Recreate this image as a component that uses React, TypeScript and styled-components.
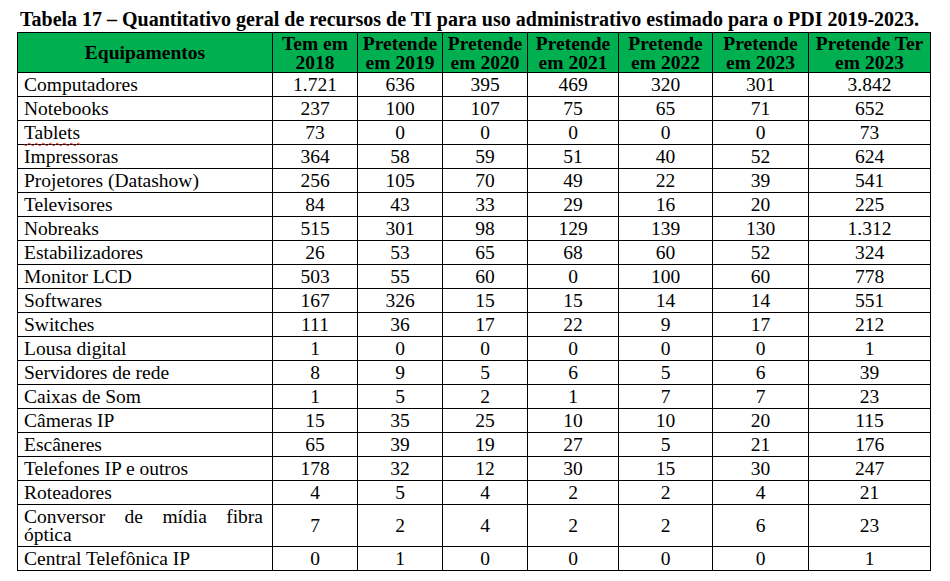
import styled, { createGlobalStyle } from "styled-components";

type Row = {
  name: string;
  values: string[];
  flagged?: boolean;
  tall?: boolean;
};

const columns = [
  { label: ["Equipamentos"], width: 255 },
  { label: ["Tem em", "2018"], width: 85 },
  { label: ["Pretende", "em 2019"], width: 85 },
  { label: ["Pretende", "em 2020"], width: 85 },
  { label: ["Pretende", "em 2021"], width: 91 },
  { label: ["Pretende", "em 2022"], width: 94 },
  { label: ["Pretende", "em 2023"], width: 96 },
  { label: ["Pretende Ter", "em 2023"], width: 122 },
];

const rows: Row[] = [
  { name: "Computadores", values: ["1.721", "636", "395", "469", "320", "301", "3.842"] },
  { name: "Notebooks", values: ["237", "100", "107", "75", "65", "71", "652"] },
  { name: "Tablets", values: ["73", "0", "0", "0", "0", "0", "73"], flagged: true },
  { name: "Impressoras", values: ["364", "58", "59", "51", "40", "52", "624"] },
  { name: "Projetores (Datashow)", values: ["256", "105", "70", "49", "22", "39", "541"] },
  { name: "Televisores", values: ["84", "43", "33", "29", "16", "20", "225"] },
  { name: "Nobreaks", values: ["515", "301", "98", "129", "139", "130", "1.312"] },
  { name: "Estabilizadores", values: ["26", "53", "65", "68", "60", "52", "324"] },
  { name: "Monitor LCD", values: ["503", "55", "60", "0", "100", "60", "778"] },
  { name: "Softwares", values: ["167", "326", "15", "15", "14", "14", "551"] },
  { name: "Switches", values: ["111", "36", "17", "22", "9", "17", "212"] },
  { name: "Lousa digital", values: ["1", "0", "0", "0", "0", "0", "1"] },
  { name: "Servidores de rede", values: ["8", "9", "5", "6", "5", "6", "39"] },
  { name: "Caixas de Som", values: ["1", "5", "2", "1", "7", "7", "23"] },
  { name: "Câmeras IP", values: ["15", "35", "25", "10", "10", "20", "115"] },
  { name: "Escâneres", values: ["65", "39", "19", "27", "5", "21", "176"] },
  { name: "Telefones IP e outros", values: ["178", "32", "12", "30", "15", "30", "247"] },
  { name: "Roteadores", values: ["4", "5", "4", "2", "2", "4", "21"] },
  { name: "Conversor de mídia fibra óptica", values: ["7", "2", "4", "2", "2", "6", "23"], tall: true },
  { name: "Central Telefônica IP", values: ["0", "1", "0", "0", "0", "0", "1"] },
];

export default function App() {
  return (
    <>
      <GlobalStyle />
      <Page>
        <Table>
          <Caption>
            Tabela 17 – Quantitativo geral de recursos de TI para uso administrativo estimado
            para o PDI 2019-2023.
          </Caption>
          <colgroup>
            {columns.map((c, i) => (
              <col key={i} style={{ width: c.width }} />
            ))}
          </colgroup>
          <thead>
            <HeadRow>
              {columns.map((c, i) => (
                <HeadCell key={i}>
                  {c.label.map((line, j) => (
                    <HeadLine key={j}>{line}</HeadLine>
                  ))}
                </HeadCell>
              ))}
            </HeadRow>
          </thead>
          <tbody>
            {rows.map((r) => (
              <BodyRow key={r.name} $tall={r.tall}>
                <NameCell $justify={r.tall}>
                  {r.flagged ? <Flagged>{r.name}</Flagged> : r.name}
                </NameCell>
                {r.values.map((v, i) => (
                  <NumCell key={i}>{v}</NumCell>
                ))}
              </BodyRow>
            ))}
          </tbody>
        </Table>
      </Page>
    </>
  );
}

/*
=========== STYLES =================
*/
const GlobalStyle = createGlobalStyle`
  html, body {
    margin: 0;
    padding: 0;
    background: #ffffff;
  }
  body {
    font-family: "Liberation Serif", "Times New Roman", serif;
    color: #000000;
  }
`;

const Page = styled.div`
  padding: 8px 0 0 17px;
`;

const Table = styled.table`
  border-collapse: collapse;
  table-layout: fixed;
  width: 913px;
  font-size: 19.5px;
`;

const Caption = styled.caption`
  caption-side: top;
  text-align: left;
  white-space: nowrap;
  padding: 0 0 1px 3px;
  font-weight: bold;
  font-size: 20px;
  line-height: 23px;
`;

const HeadRow = styled.tr`
  height: 40px;
  background: #00b050;
`;

const HeadCell = styled.th`
  border: 1px solid #000;
  padding: 0 2px;
  font-weight: bold;
  text-align: center;
  vertical-align: middle;
  line-height: 19px;
`;

const HeadLine = styled.span`
  display: block;
  white-space: nowrap;
`;

const BodyRow = styled.tr<{ $tall?: boolean }>`
  height: ${(p) => (p.$tall ? "42px" : "24px")};
`;

const NameCell = styled.td<{ $justify?: boolean }>`
  border: 1px solid #000;
  padding: 0 9px 0 6px;
  text-align: ${(p) => (p.$justify ? "justify" : "left")};
  line-height: ${(p) => (p.$justify ? "18px" : "22px")};
  vertical-align: middle;
`;

const NumCell = styled.td`
  border: 1px solid #000;
  padding: 0;
  text-align: center;
  line-height: 22px;
  vertical-align: middle;
`;

const Flagged = styled.span`
  text-decoration: underline wavy #e3342f;
  text-decoration-thickness: 1px;
  text-underline-offset: 3px;
`;
